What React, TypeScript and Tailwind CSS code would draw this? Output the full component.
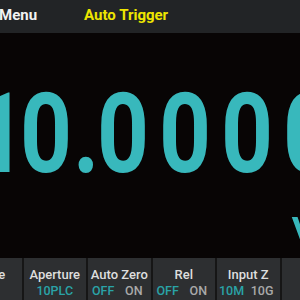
import React from "react";

const font = { fontFamily: "Roboto, 'Liberation Sans', sans-serif" };

function Btn({ label, children, extra = "" }: { label: string; children: React.ReactNode; extra?: string }) {
  return (
    <div className={`w-[62.5px] shrink-0 bg-[#2d2f31] flex flex-col items-center pt-[10px] ${extra}`}>
      <div className="text-[13px] leading-none font-medium text-[#dedede] whitespace-nowrap">{label}</div>
      <div className="mt-[4px] text-[12.5px] leading-none font-medium w-full">{children}</div>
    </div>
  );
}

function Toggle({ a, b, pl, pr }: { a: string; b: string; pl: string; pr: string }) {
  return (
    <div className={`flex justify-between ${pl} ${pr}`}>
      <span className="text-[#2aa3a7]">{a}</span>
      <span className="text-[#a9a9a9]">{b}</span>
    </div>
  );
}

function Digit({ ch, w, ml }: { ch: string; w: string; ml: string }) {
  return (
    <span className={`${w} ${ml} shrink-0 flex justify-center`}>
      <span className="inline-block scale-x-[0.81]">{ch}</span>
    </span>
  );
}

export default function App() {
  return (
    <div className="w-[300px] h-[300px] overflow-hidden bg-[#080505] flex flex-col" style={font}>
      <div className="h-[33px] shrink-0 bg-[#222426] flex items-start pt-[8px]">
        <span className="ml-[-1px] text-[15px] leading-none font-bold text-[#f2f2f2]">Menu</span>
        <span className="ml-[47px] text-[15px] leading-none font-bold text-[#eee600]">Auto Trigger</span>
      </div>
      <div className="h-[225px] shrink-0 overflow-hidden pt-[45px] flex flex-col">
        <div className="h-[112px] flex items-start text-[112px] leading-none font-bold text-[#38b8bc] whitespace-nowrap">
          <Digit ch="1" w="w-[47px]" ml="ml-[-23.5px]" />
          <Digit ch="0" w="w-[47px]" ml="ml-[-0.5px]" />
          <Digit ch="." w="w-[13px]" ml="ml-[10px]" />
          <Digit ch="0" w="w-[47px]" ml="ml-[7px]" />
          <Digit ch="0" w="w-[47px]" ml="ml-[15px]" />
          <Digit ch="0" w="w-[47px]" ml="ml-[15px]" />
          <Digit ch="0" w="w-[47px]" ml="ml-[15px]" />
        </div>
        <div className="mt-[20px] ml-[291px] text-[56px] leading-none text-[#38b8bc] whitespace-nowrap">V</div>
      </div>
      <div className="flex-1 flex gap-[2px] bg-[#161616] ml-[-41px]">
        <Btn label="Range" extra="pr-[7px]">
          <div className="text-center text-[#2aa3a7]">Auto</div>
        </Btn>
        <Btn label="Aperture">
          <div className="text-center text-[#2aa3a7]">10PLC</div>
        </Btn>
        <Btn label="Auto Zero">
          <Toggle a="OFF" b="ON" pl="pl-[4px]" pr="pr-[8px]" />
        </Btn>
        <Btn label="Rel">
          <Toggle a="OFF" b="ON" pl="pl-[4px]" pr="pr-[8px]" />
        </Btn>
        <Btn label="Input Z">
          <Toggle a="10M" b="10G" pl="pl-[2px]" pr="pr-[6px]" />
        </Btn>
        <Btn label="">
          <div />
        </Btn>
      </div>
    </div>
  );
}
